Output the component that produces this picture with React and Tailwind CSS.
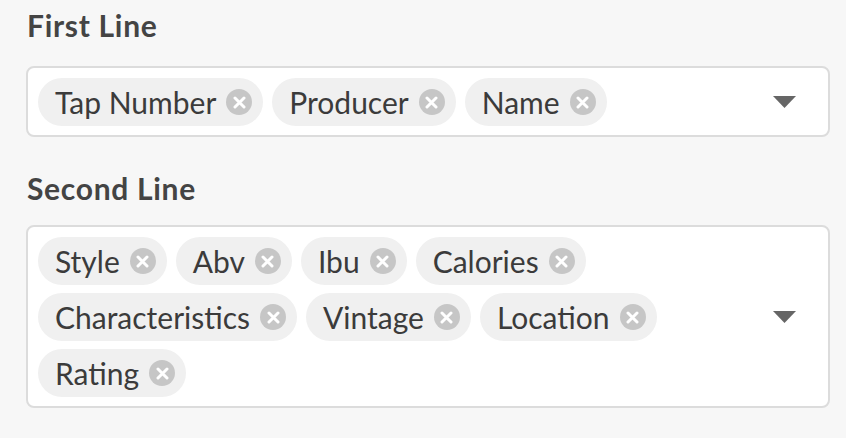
import React from "react";

const font = { fontFamily: "Lato, 'Open Sans', sans-serif" };

function Chip({ label }) {
  return (
    <div className="flex h-[48px] items-center gap-[10px] rounded-full bg-[#f0f0f0] pl-[17px] pr-[11px]">
      <span className="text-[30px] leading-none text-[#3b3b3b]">{label}</span>
      <span className="flex h-[26px] w-[26px] items-center justify-center rounded-full bg-[#c6c6c6]">
        <svg width="13" height="13" viewBox="0 0 13 13">
          <path d="M2 2 L11 11 M11 2 L2 11" stroke="#fff" strokeWidth="3" strokeLinecap="round" />
        </svg>
      </span>
    </div>
  );
}

function MultiSelect({ items }) {
  return (
    <div className="flex items-center rounded-[8px] border-2 border-[#dcdcdc] bg-white pl-[10px] pr-[32px]">
      <div className="flex flex-1 flex-wrap gap-x-[9px] gap-y-[8px] pt-[10px] pb-[9px] pr-[60px]">
        {items.map((item) => (
          <Chip key={item} label={item} />
        ))}
      </div>
      <svg width="23" height="12" viewBox="0 0 23 12">
        <path d="M0 0 L23 0 L11.5 12 Z" fill="#666" />
      </svg>
    </div>
  );
}

export default function App() {
  return (
    <div className="min-h-screen bg-[#f7f7f7] pl-[26px] pr-[16px] pt-[7px]" style={font}>
      <h2 className="mb-[23px] pl-[1px] text-[30px] font-bold leading-[36px] tracking-[0.7px] text-[#444]">First Line</h2>
      <MultiSelect items={["Tap Number", "Producer", "Name"]} />
      <h2 className="mb-[19px] mt-[33px] pl-[1px] text-[30px] font-bold leading-[36px] tracking-[0.7px] text-[#444]">Second Line</h2>
      <MultiSelect
        items={["Style", "Abv", "Ibu", "Calories", "Characteristics", "Vintage", "Location", "Rating"]}
      />
    </div>
  );
}
